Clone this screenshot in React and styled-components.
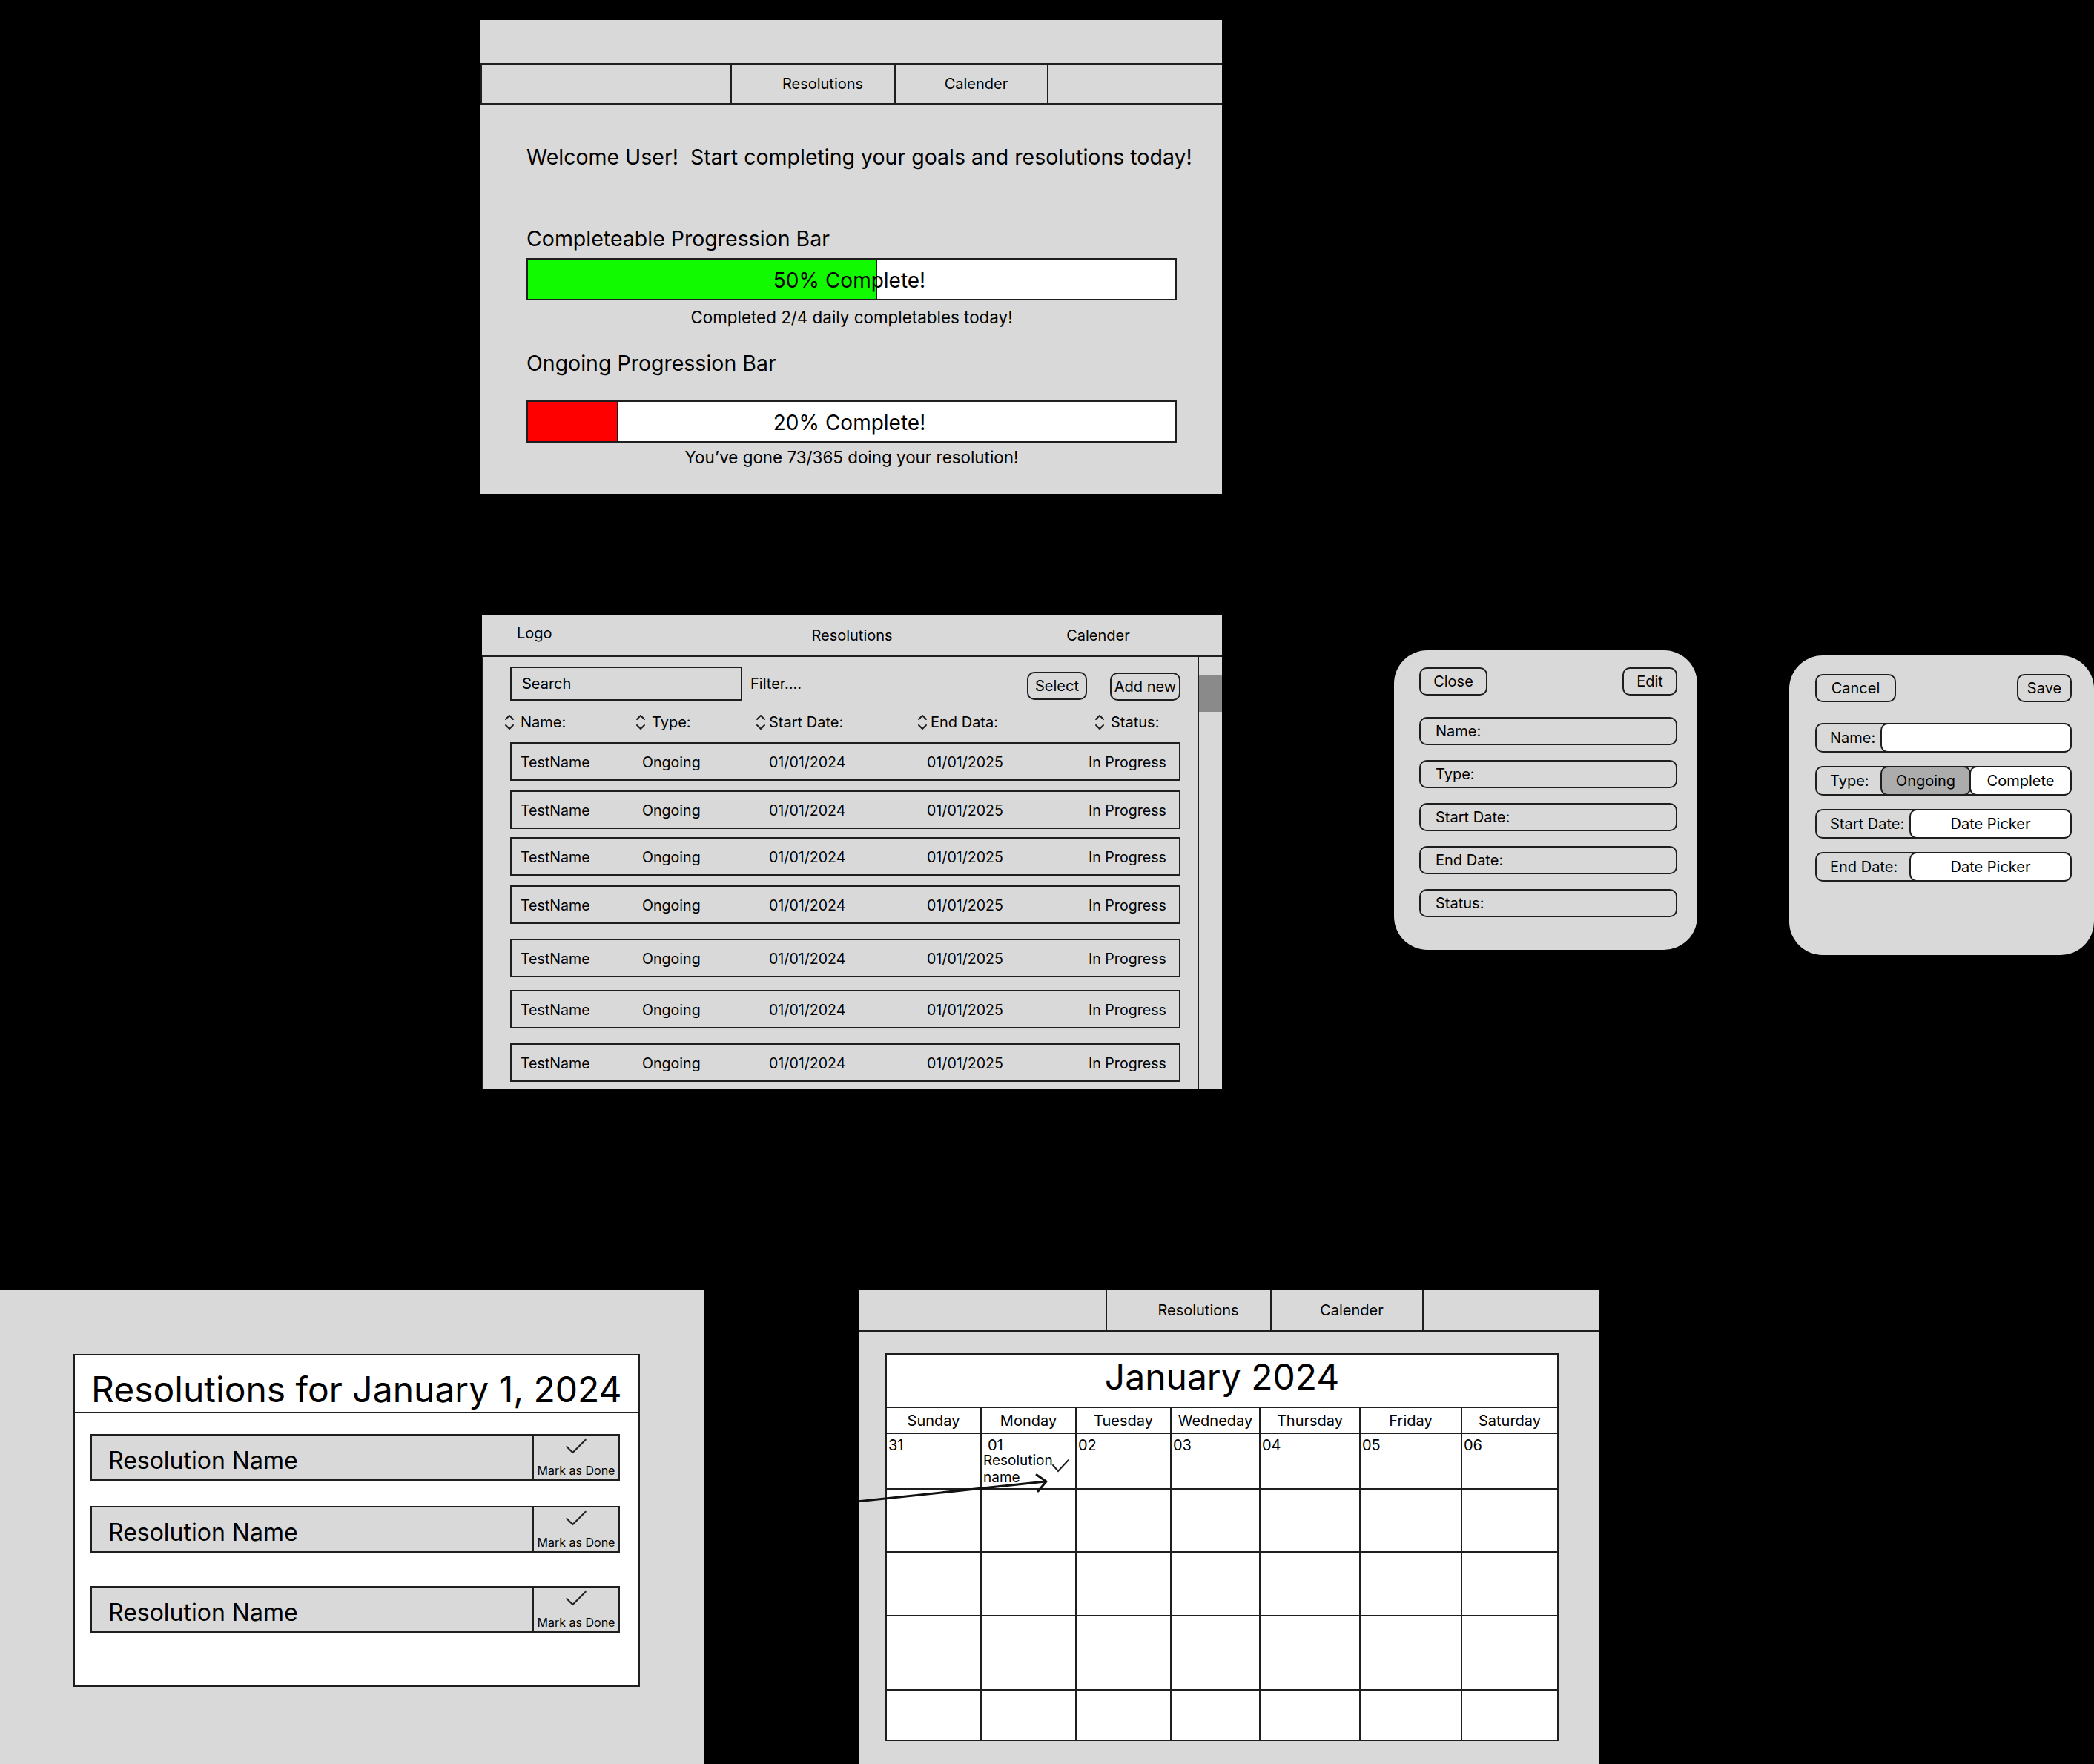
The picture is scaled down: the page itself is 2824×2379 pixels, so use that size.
import React from 'react';
import styled, { createGlobalStyle } from 'styled-components';

const GlobalStyle = createGlobalStyle`
  html, body {
    margin:0;
    padding:0;
    background:#000;
  }
  body {
    width:2824px;
    height:2379px;
    overflow:hidden;
    font-family:Inter, "Noto Sans", sans-serif;
    color:#000;
  }
  * { box-sizing:border-box; }
`;

const Canvas = styled.div`
    position:relative;
    width:2824px;
    height:2379px;
    background:#000;
`;

// frames sit on a free canvas, like artboards
const Frame = styled.div`
    position:absolute;
    left:${p => p.$x}px;
    top:${p => p.$y}px;
    width:${p => p.$w}px;
    height:${p => p.$h}px;
    background:#d9d9d9;
    border-radius:${p => p.$r || 0}px;
    overflow:hidden;
    display:flex;
    flex-direction:column;
`;

const TabBar = styled.div`
    display:grid;
    grid-template-columns:${p => p.$cols};
    height:56px;
    margin-top:${p => p.$top || 0}px;
    border-top:${p => p.$top ? '2px solid #1e1e1e' : 'none'};
    border-bottom:2px solid #1e1e1e;
    border-left:${p => p.$left ? '2px solid #1e1e1e' : 'none'};
`;
const Tab = styled.div`
    display:flex;
    align-items:center;
    justify-content:center;
    padding-left:${p => p.$shift || 0}px;
    font-size:20px;
    border-right:2px solid #1e1e1e;
    &:last-child{ border-right:none; }
`;

/* ---------- home ---------- */
const HomeBody = styled.div`
    padding:0 62px;
    display:flex;
    flex-direction:column;
`;
const Welcome = styled.div`
    margin-top:53px;
    font-size:28.5px;
    line-height:36px;
    white-space:nowrap;
`;
const SectionLabel = styled.div`
    margin-top:${p => p.$mt}px;
    font-size:28.5px;
    line-height:36px;
`;
const Bar = styled.div`
    position:relative;
    margin-top:${p => p.$mt}px;
    width:877px;
    height:57px;
    background:#fff;
    border:2px solid #1e1e1e;
    display:flex;
`;
const BarFill = styled.div`
    height:100%;
    background:${p => p.$color};
    border-right:2px solid #1e1e1e;
`;
const BarText = styled.div`
    position:absolute;
    inset:0;
    display:flex;
    align-items:center;
    justify-content:center;
    padding:3px 6px 0 0;
    font-size:28px;
`;
const Caption = styled.div`
    margin-top:${p => p.$mt}px;
    width:877px;
    text-align:center;
    font-size:22.4px;
    line-height:28px;
`;

/* ---------- table ---------- */
const TableHead = styled.div`
    display:grid;
    grid-template-columns:340px 318px 1fr;
    height:56px;
    border-bottom:2px solid #1e1e1e;
    font-size:20px;
    align-items:center;
`;
const Logo = styled.div`
    padding-left:47px;
    margin-top:-6px;
`;
const HeadLink = styled.div`
    text-align:center;
    padding-left:${p => p.$shift || 0}px;
`;
const TableBody = styled.div`
    flex:1;
    display:flex;
    border-left:2px solid #1e1e1e;
`;
const Main = styled.div`
    flex:1;
    padding:13px 23px 0 36px;
    display:flex;
    flex-direction:column;
`;
const ScrollTrack = styled.div`
    width:33px;
    border-left:2px solid #1e1e1e;
`;
const ScrollThumb = styled.div`
    margin-top:25px;
    height:49px;
    background:#8a8a8a;
`;
const Toolbar = styled.div`
    display:flex;
    align-items:center;
    height:46px;
    font-size:20px;
`;
const SearchBox = styled.div`
    width:313px;
    height:46px;
    border:2px solid #1e1e1e;
    display:flex;
    align-items:center;
    padding-left:14px;
`;
const FilterText = styled.div`
    margin-left:11px;
`;
const PillButton = styled.div`
    width:${p => p.$w}px;
    height:38px;
    margin-left:${p => p.$ml || 0};
    margin-top:${p => p.$mt || 0}px;
    border:2px solid #1e1e1e;
    border-radius:10px;
    display:flex;
    align-items:center;
    justify-content:center;
    font-size:20px;
`;
const ColHeads = styled.div`
    margin-top:16px;
    display:grid;
    grid-template-columns:177px 158px 218px 243px 1fr;
    padding-left:14px;
    height:24px;
    font-size:20px;
    align-items:center;
`;
const ColHead = styled.div`
    display:flex;
    align-items:center;
    margin-left:${p => p.$ml || -22}px;
    gap:${p => p.$gap || 8}px;
`;
const Row = styled.div`
    margin-top:${p => p.$mt}px;
    height:52px;
    border:2px solid #1e1e1e;
    display:grid;
    grid-template-columns:164px 171px 213px 218px 1fr;
    padding:2px 0 0 12px;
    align-items:center;
    font-size:19.6px;
`;

/* ---------- modals ---------- */
const ModalButtons = styled.div`
    display:flex;
    justify-content:space-between;
`;
const FieldList = styled.div`
    margin-top:${p => p.$mt}px;
    display:flex;
    flex-direction:column;
    gap:${p => p.$gap}px;
`;
const Field = styled.div`
    height:38px;
    border:2px solid #1e1e1e;
    border-radius:10px;
    display:flex;
    align-items:center;
    padding-left:20px;
    font-size:20px;
`;
const EditRow = styled.div`
    height:40px;
    border:2px solid #1e1e1e;
    border-radius:10px;
    display:flex;
    align-items:stretch;
    font-size:20px;
`;
const EditLabel = styled.div`
    width:${p => p.$w}px;
    display:flex;
    align-items:center;
    padding-left:18px;
`;
const EditInput = styled.div`
    flex:${p => p.$w ? 'none' : 1};
    width:${p => p.$w ? p.$w + 'px' : 'auto'};
    margin:-2px -2px -2px 0;
    border:2px solid #1e1e1e;
    border-radius:10px;
    background:${p => p.$bg || '#fff'};
    display:flex;
    align-items:center;
    justify-content:center;
`;

/* ---------- day list ---------- */
const DayPanel = styled.div`
    margin:86px 0 0 99px;
    width:764px;
    height:449px;
    background:#fff;
    border:2px solid #1e1e1e;
`;
const DayTitle = styled.div`
    height:78px;
    border-bottom:2px solid #1e1e1e;
    padding-left:22px;
    display:flex;
    align-items:flex-end;
    font-size:48px;
    line-height:60px;
`;
const DayItems = styled.div`
    padding:0 0 0 21px;
`;
const DayItem = styled.div`
    margin-top:${p => p.$mt}px;
    width:714px;
    height:63px;
    border:2px solid #1e1e1e;
    background:#d9d9d9;
    display:flex;
`;
const ItemName = styled.div`
    flex:1;
    display:flex;
    align-items:center;
    padding:8px 0 0 22px;
    font-size:32px;
`;
const MarkDone = styled.div`
    width:116px;
    border-left:2px solid #1e1e1e;
    display:flex;
    flex-direction:column;
    align-items:center;
    justify-content:space-between;
    padding:3px 0 2px;
    font-size:16px;
    line-height:20px;
`;

/* ---------- calendar ---------- */
const CalBox = styled.div`
    margin:29px 0 0 36px;
    width:908px;
    height:523px;
    background:#fff;
    border:2px solid #1e1e1e;
    display:flex;
    flex-direction:column;
`;
const CalTitle = styled.div`
    height:72px;
    border-bottom:2px solid #1e1e1e;
    display:flex;
    align-items:center;
    justify-content:center;
    padding-bottom:12px;
    font-size:48px;
`;
const CalGrid = styled.div`
    flex:1;
    display:grid;
    grid-template-columns:128px 128px 128px 120px 135px 137px 1fr;
    grid-template-rows:35px 75px 85px 86px 100px 1fr;
`;
const DayHead = styled.div`
    border-right:2px solid #1e1e1e;
    border-bottom:2px solid #1e1e1e;
    display:flex;
    align-items:center;
    justify-content:center;
    font-size:20px;
    &:nth-child(7n){ border-right:none; }
`;
const Cell = styled.div`
    position:relative;
    border-right:2px solid #1e1e1e;
    border-bottom:${p => p.$last ? 'none' : '2px solid #1e1e1e'};
    padding:4px 0 0 2px;
    font-size:20px;
    line-height:22px;
    &:nth-child(7n){ border-right:none; }
`;
const CellDay = styled.div`
    padding-left:6px;
`;
const CellNote = styled.div`
    margin-top:-2px;
    font-size:19px;
    line-height:23px;
    width:100px;
`;
const CellCheck = styled.svg`
    position:absolute;
    left:94px;
    top:33px;
`;
const Overlay = styled.svg`
    position:absolute;
    left:0;
    top:0;
    pointer-events:none;
`;

const SortIcon = () => (
    <svg width="14" height="26" viewBox="0 0 14 26" fill="none" stroke="#1e1e1e" strokeWidth="2" strokeLinecap="round" strokeLinejoin="round">
        <path d="M2 9 L7 4 L12 9" />
        <path d="M2 17 L7 22 L12 17" />
    </svg>
);

const Check = ({ size = 26 }) => (
    <svg width={size} height={size * 0.8} viewBox="0 0 26 20" fill="none" stroke="#1e1e1e" strokeWidth="1.8" strokeLinecap="round" strokeLinejoin="round">
        <path d="M2 10 L9 17 L24 2" />
    </svg>
);

const rows = [0, 13, 11, 13, 20, 17, 20];
const days = ['Sunday', 'Monday', 'Tuesday', 'Wedneday', 'Thursday', 'Friday', 'Saturday'];
const firstWeek = ['31', '01', '02', '03', '04', '05', '06'];

const App = () => {
    const complete = 54;
    const ongoing = 14;
    return <>
        <GlobalStyle />
        <Canvas>
            <Frame $x={648} $y={27} $w={1000} $h={639}>
                <TabBar $top={58} $left $cols="337px 221px 206px 1fr">
                    <Tab />
                    <Tab $shift={26}>Resolutions</Tab>
                    <Tab $shift={13}>Calender</Tab>
                    <Tab />
                </TabBar>
                <HomeBody>
                    <Welcome>Welcome User!&nbsp; Start completing your goals and resolutions today!</Welcome>
                    <SectionLabel $mt={74}>Completeable Progression Bar</SectionLabel>
                    <Bar $mt={8}>
                        <BarFill $color="#12fa00" style={{ width: complete + '%' }} />
                        <BarText>50% Complete!</BarText>
                    </Bar>
                    <Caption $mt={9}>Completed 2/4 daily completables today!</Caption>
                    <SectionLabel $mt={30}>Ongoing Progression Bar</SectionLabel>
                    <Bar $mt={32}>
                        <BarFill $color="#ff0000" style={{ width: ongoing + '%' }} />
                        <BarText>20% Complete!</BarText>
                    </Bar>
                    <Caption $mt={6}>You’ve gone 73/365 doing your resolution!</Caption>
                </HomeBody>
            </Frame>

            <Frame $x={650} $y={830} $w={998} $h={638}>
                <TableHead>
                    <Logo>Logo</Logo>
                    <HeadLink>Resolutions</HeadLink>
                    <HeadLink $shift={6}>Calender</HeadLink>
                </TableHead>
                <TableBody>
                    <Main>
                        <Toolbar>
                            <SearchBox>Search</SearchBox>
                            <FilterText>Filter....</FilterText>
                            <PillButton $w={81} $ml="auto" $mt={6}>Select</PillButton>
                            <PillButton $w={95} $ml="31px" $mt={8}>Add new</PillButton>
                        </Toolbar>
                        <ColHeads>
                            <ColHead><SortIcon />Name:</ColHead>
                            <ColHead><SortIcon />Type:</ColHead>
                            <ColHead $ml={-18} $gap={4}><SortIcon />Start Date:</ColHead>
                            <ColHead $ml={-18} $gap={4}><SortIcon />End Data:</ColHead>
                            <ColHead><SortIcon />Status:</ColHead>
                        </ColHeads>
                        {rows.map((mt, i) => (
                            <Row key={i} $mt={i === 0 ? 16 : mt}>
                                <span>TestName</span>
                                <span>Ongoing</span>
                                <span>01/01/2024</span>
                                <span>01/01/2025</span>
                                <span>In Progress</span>
                            </Row>
                        ))}
                    </Main>
                    <ScrollTrack>
                        <ScrollThumb />
                    </ScrollTrack>
                </TableBody>
            </Frame>

            <Frame $x={1880} $y={877} $w={409} $h={404} $r={45} style={{ padding: '23px 27px 0 34px' }}>
                <ModalButtons>
                    <PillButton $w={92}>Close</PillButton>
                    <PillButton $w={74}>Edit</PillButton>
                </ModalButtons>
                <FieldList $mt={29} $gap={20}>
                    <Field>Name:</Field>
                    <Field>Type:</Field>
                    <Field>Start Date:</Field>
                    <Field>End Date:</Field>
                    <Field>Status:</Field>
                </FieldList>
            </Frame>

            <Frame $x={2413} $y={884} $w={411} $h={404} $r={45} style={{ padding: '25px 30px 0 35px' }}>
                <ModalButtons>
                    <PillButton $w={109}>Cancel</PillButton>
                    <PillButton $w={74}>Save</PillButton>
                </ModalButtons>
                <FieldList $mt={28} $gap={18}>
                    <EditRow>
                        <EditLabel $w={86}>Name:</EditLabel>
                        <EditInput />
                    </EditRow>
                    <EditRow>
                        <EditLabel $w={86}>Type:</EditLabel>
                        <EditInput $w={122} $bg="#acacac">Ongoing</EditInput>
                        <EditInput>Complete</EditInput>
                    </EditRow>
                    <EditRow>
                        <EditLabel $w={125}>Start Date:</EditLabel>
                        <EditInput>Date Picker</EditInput>
                    </EditRow>
                    <EditRow>
                        <EditLabel $w={125}>End Date:</EditLabel>
                        <EditInput>Date Picker</EditInput>
                    </EditRow>
                </FieldList>
            </Frame>

            <Frame $x={0} $y={1740} $w={949} $h={639}>
                <DayPanel>
                    <DayTitle>Resolutions for January 1, 2024</DayTitle>
                    <DayItems>
                        {[28, 34, 45].map((mt, i) => (
                            <DayItem key={i} $mt={mt}>
                                <ItemName>Resolution Name</ItemName>
                                <MarkDone>
                                    <Check size={30} />
                                    Mark as Done
                                </MarkDone>
                            </DayItem>
                        ))}
                    </DayItems>
                </DayPanel>
            </Frame>

            <Frame $x={1158} $y={1740} $w={998} $h={639}>
                <TabBar $cols="335px 222px 205px 1fr">
                    <Tab />
                    <Tab $shift={26}>Resolutions</Tab>
                    <Tab $shift={13}>Calender</Tab>
                    <Tab />
                </TabBar>
                <CalBox>
                    <CalTitle>January 2024</CalTitle>
                    <CalGrid>
                        {days.map(d => <DayHead key={d}>{d}</DayHead>)}
                        {firstWeek.map((n, i) => (
                            <Cell key={n}>
                                {i === 1 ? <>
                                    <CellDay>{n}</CellDay>
                                    <CellNote>Resolution name</CellNote>
                                    <CellCheck width="26" height="20" viewBox="0 0 26 20" fill="none" stroke="#1e1e1e" strokeWidth="2" strokeLinecap="round">
                                        <path d="M2 9 L9 17 L23 2" />
                                    </CellCheck>
                                </> : n}
                            </Cell>
                        ))}
                        {Array.from({ length: 28 }).map((_, i) => <Cell key={'c' + i} $last={i >= 21} />)}
                    </CalGrid>
                </CalBox>
                <Overlay width="998" height="639" viewBox="0 0 998 639" fill="none" stroke="#111" strokeWidth="3" strokeLinecap="round" strokeLinejoin="round">
                    <path d="M-2 285 L252 258" />
                    <path d="M240 249 L253 258 L242 271" />
                </Overlay>
            </Frame>
        </Canvas>
    </>;
};

export default App;
